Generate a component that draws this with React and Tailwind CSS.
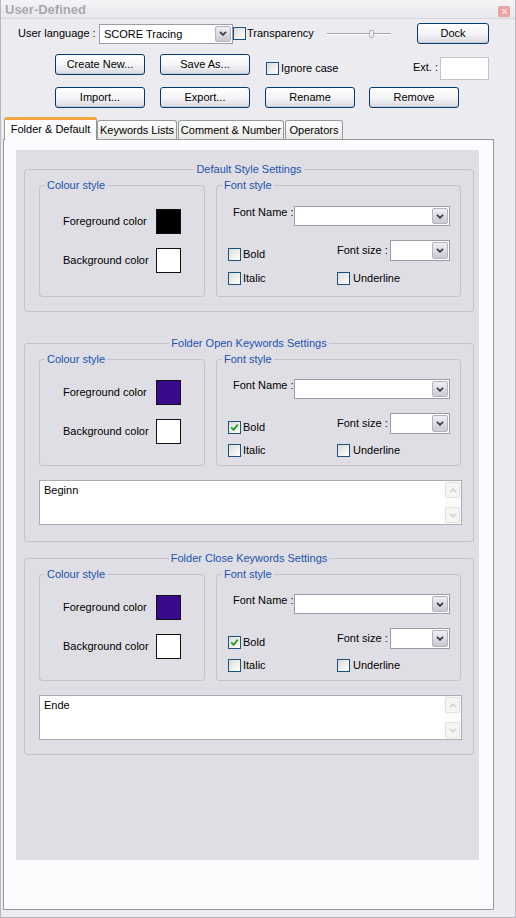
import React from "react";

const Btn = ({ children, className = "" }) => (
  <button
    className={`h-[21px] rounded-[3px] border border-[#003c74] bg-linear-to-b from-white via-[#f5f5f7] to-[#d9d9e2] text-[11px] leading-[13px] text-black shadow-[inset_0_-1px_0_#c9c9d6] ${className}`}
  >
    {children}
  </button>
);

const Check = ({ checked }) => (
  <span className="flex w-[13px] h-[13px] shrink-0 items-center justify-center border border-[#1c5180] bg-linear-to-br from-[#dcdcd7] to-white">
    {checked && (
      <svg viewBox="0 0 9 9" className="w-[9px] h-[9px]">
        <path d="M1.2 4.4 L3.6 6.8 L7.8 1.6" stroke="#21a121" strokeWidth="1.9" fill="none" />
      </svg>
    )}
  </span>
);

const Arrow = () => (
  <span className="m-px flex w-[16px] items-center justify-center rounded-[2px] border border-[#b4b4be] bg-linear-to-b from-[#eeeef2] to-[#c9c9d2]">
    <svg viewBox="0 0 8 5" className="w-[8px] h-[5px]">
      <path d="M1 0.8 L4 3.8 L7 0.8" stroke="#3a3a4c" strokeWidth="1.8" fill="none" />
    </svg>
  </span>
);

const Combo = ({ className = "", text = "" }) => (
  <div className={`flex border border-[#9c9ca8] bg-white ${className}`}>
    <div className="flex-1 pl-[4px] leading-[18px] truncate">{text}</div>
    <Arrow />
  </div>
);

const Swatch = ({ color }) => (
  <span className={`block w-[25px] h-[25px] border border-[#111] ${color}`} />
);

// group box: caption sits in the top edge, lines drawn by flex segments
const Group = ({ title, center, className = "", children }) => (
  <div className={`flex flex-col ${className}`}>
    <div className="flex h-[13px] shrink-0">
      <div className={`mt-[6px] rounded-tl-[4px] border-l border-t border-[#c4c3cb] ${center ? "flex-1" : "w-[6px]"}`} />
      <span className="px-[2px] leading-[13px] text-[#1c52ad]">{title}</span>
      <div className="mt-[6px] flex-1 rounded-tr-[4px] border-r border-t border-[#c4c3cb]" />
    </div>
    <div className="flex-1 rounded-b-[4px] border-x border-b border-[#c4c3cb]">{children}</div>
  </div>
);

const ColourStyle = ({ fg, tight }) => (
  <Group title="Colour style" className={`w-[166px] ${tight ? "h-[113px]" : "h-[118px]"}`}>
    <div className={`flex flex-col gap-[14px] pl-[23px] ${tight ? "pt-[14px]" : "pt-[17px]"}`}>
      <div className="flex items-center">
        <span className="w-[93px]">Foreground color</span>
        <Swatch color={fg} />
      </div>
      <div className="flex items-center">
        <span className="w-[93px]">Background color</span>
        <Swatch color="bg-white" />
      </div>
    </div>
  </Group>
);

const FontStyle = ({ bold, tight }) => (
  <Group title="Font style" className={`w-[245px] ${tight ? "h-[113px]" : "h-[118px]"}`}>
    <div className={`pl-[16px] ${tight ? "pt-[13px]" : "pt-[14px]"}`}>
      <div className="flex items-start">
        <span className="w-[61px] leading-[13px]">Font Name :</span>
        <Combo className="w-[156px] h-[20px]" />
      </div>
    </div>
    <div className="mt-[14px] flex h-[21px] pl-[11px]">
      <label className="flex w-[109px] items-end gap-[2px]">
        <Check checked={bold} />
        <span className="leading-[13px]">Bold</span>
      </label>
      <div className="flex items-center">
        <span className="w-[53px]">Font size :</span>
        <Combo className="w-[60px] h-[21px]" />
      </div>
    </div>
    <div className={`flex pl-[11px] ${tight ? "mt-[10px]" : "mt-[11px]"}`}>
      <label className="flex w-[109px] items-center gap-[2px]">
        <Check />
        <span className="leading-[13px]">Italic</span>
      </label>
      <label className="flex items-center gap-[3px]">
        <Check />
        <span className="leading-[13px]">Underline</span>
      </label>
    </div>
  </Group>
);

const ScrollBtn = ({ up }) => (
  <span className="flex h-[16px] items-center justify-center rounded-[2px] border border-[#e2e2de] bg-[#f5f5f3]">
    <svg viewBox="0 0 8 5" className="w-[8px] h-[5px]">
      <path d={up ? "M1 4.2 L4 1.2 L7 4.2" : "M1 0.8 L4 3.8 L7 0.8"} stroke="#d0d0cc" strokeWidth="1.6" fill="none" />
    </svg>
  </span>
);

const Keywords = ({ text }) => (
  <div className="ml-[14px] mt-[14px] flex w-[423px] h-[45px] border border-[#a9adb6] bg-white">
    <div className="flex-1 px-[4px] pt-[3px] leading-[13px]">{text}</div>
    <div className="flex w-[17px] flex-col bg-[#fbfbf9] p-px">
      <ScrollBtn up />
      <div className="flex-1" />
      <ScrollBtn />
    </div>
  </div>
);

const Settings = ({ title, fg, bold, text, tight, className = "" }) => (
  <Group title={title} center className={`ml-[8px] w-[450px] ${className}`}>
    <div className="flex gap-[11px] pl-[14px] pt-[3px]">
      <ColourStyle fg={fg} tight={tight} />
      <FontStyle bold={bold} tight={tight} />
    </div>
    {text && <Keywords text={text} />}
  </Group>
);

const tabs = [
  { name: "Keywords Lists", w: "w-[80px]" },
  { name: "Comment & Number", w: "w-[106px]" },
  { name: "Operators", w: "w-[58px]" },
];

export default function App() {
  return (
    <div className="w-[516px] h-[918px] overflow-hidden border-x border-b border-[#b7b7c0] bg-[#ecebf0] text-[11px] text-black font-['Liberation_Sans',Arial,sans-serif]">
      {/* title bar */}
      <div className="flex h-[19px] items-center justify-between border-b border-[#d6d6dc] bg-linear-to-b from-[#f4f4f6] to-[#e8e8ec] pl-[4px] pr-[5px]">
        <span className="text-[13px] font-bold leading-[15px] text-[#a8a8b0]">User-Defined</span>
        <span className="mt-[4px] flex w-[12px] h-[11px] items-center justify-center rounded-[2px] bg-[#e9a3a3]">
          <svg viewBox="0 0 8 8" className="w-[7px] h-[7px]">
            <path d="M1 1 L7 7 M7 1 L1 7" stroke="#f8dede" strokeWidth="1.6" />
          </svg>
        </span>
      </div>

      {/* row 1 */}
      <div className="mt-[4px] flex h-[21px] items-center">
        <span className="ml-[17px] w-[81px]">User language :</span>
        <Combo className="w-[134px] h-[20px]" text="SCORE Tracing" />
        <label className="flex w-[94px] items-center gap-[1px]">
          <Check />
          <span>Transparency</span>
        </label>
        <div className="relative flex w-[64px] h-[12px] items-center">
          <div className="h-[2px] w-full border-t border-[#a3a3aa] border-b border-b-white" />
          <span className="absolute left-[42px] top-[2px] h-[8px] w-[5px] rounded-b-[2px] border border-[#b4b4bc] bg-[#f0f0f3]" />
        </div>
        <Btn className="ml-[26px] w-[72px]">Dock</Btn>
      </div>

      {/* row 2 */}
      <div className="mt-[10px] flex h-[26px] items-start pr-[26px]">
        <Btn className="ml-[54px] w-[90px]">Create New...</Btn>
        <Btn className="ml-[15px] w-[90px]">Save As...</Btn>
        <label className="ml-[16px] mt-[8px] flex items-center gap-[2px]">
          <Check />
          <span className="leading-[13px]">Ignore case</span>
        </label>
        <div className="flex-1" />
        <span className="mt-[7px] mr-[2px] leading-[13px]">Ext. :</span>
        <div className="mt-[3px] w-[49px] h-[23px] border border-[#c3c3cb] bg-white" />
      </div>

      {/* row 3 */}
      <div className="mt-[7px] flex h-[21px]">
        <Btn className="ml-[54px] w-[90px]">Import...</Btn>
        <Btn className="ml-[15px] w-[90px]">Export...</Btn>
        <Btn className="ml-[15px] w-[90px]">Rename</Btn>
        <Btn className="ml-[14px] w-[90px]">Remove</Btn>
      </div>

      {/* tabs */}
      <div className="mt-[9px] flex h-[22px] items-end pl-[3px]">
        <div className="relative z-10 -mb-px flex w-[93px] h-[23px] items-center justify-center rounded-t-[3px] border-x border-t-[3px] border-[#919b9c] border-t-[#f1a640] bg-[#fcfcfe] pb-[2px]">
          Folder &amp; Default
        </div>
        {tabs.map((t, i) => (
          <div
            key={t.name}
            className={`flex h-[19px] items-center justify-center rounded-t-[3px] border-x border-t border-[#919b9c] bg-linear-to-b from-white to-[#e9e8e4] ${t.w} ${i > 0 ? "ml-[1px]" : ""}`}
          >
            {t.name}
          </div>
        ))}
      </div>

      {/* tab panel */}
      <div className="ml-[2px] w-[491px] h-[771px] border border-[#919b9c] bg-[#fcfcfe] pl-[12px] pt-[10px]">
        <div className="w-[463px] h-[710px] bg-[#dfdee4] pt-[13px]">
          <Settings title="Default Style Settings" fg="bg-black" className="h-[149px]" />
          <Settings
            title="Folder Open Keywords Settings"
            fg="bg-[#3a0a8c]"
            bold
            tight
            text="Beginn"
            className="mt-[25px] h-[205px]"
          />
          <Settings
            title="Folder Close Keywords Settings"
            fg="bg-[#3a0a8c]"
            bold
            tight
            text="Ende"
            className="mt-[10px] h-[203px]"
          />
        </div>
      </div>
    </div>
  );
}
